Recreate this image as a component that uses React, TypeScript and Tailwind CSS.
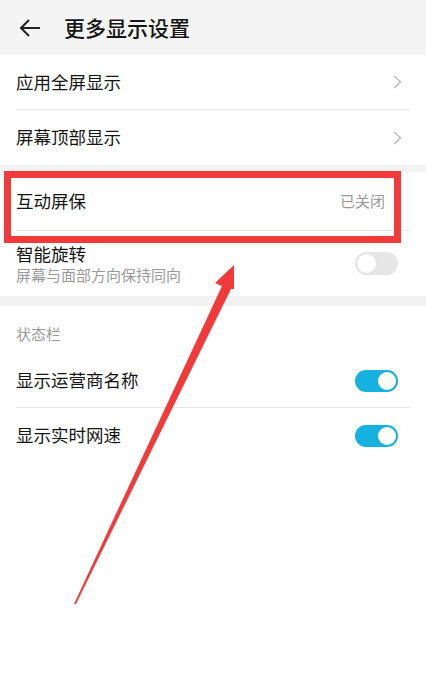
import React from "react";

const font = { fontFamily: '"Noto Sans CJK SC", "Noto Sans", sans-serif' };

function Chevron() {
  return (
    <svg width="9" height="14" viewBox="0 0 9 14" fill="none">
      <path d="M1 1l6.5 6L1 13" stroke="#b8b8b8" strokeWidth="1.4" />
    </svg>
  );
}

function Toggle({ on }: { on: boolean }) {
  return on ? (
    <div className="w-[43px] h-[22px] rounded-full bg-[#17b1df] flex items-center justify-end pr-[2px]">
      <div className="w-[18px] h-[18px] rounded-full bg-white" />
    </div>
  ) : (
    <div className="w-[43px] h-[23px] rounded-full bg-[#e6e6e6] flex items-center pl-[1px]">
      <div className="w-[21px] h-[21px] rounded-full bg-white border border-[#e0e0e0]" />
    </div>
  );
}

export default function App() {
  return (
    <div className="relative w-[426px] h-[697px] bg-white overflow-hidden text-[#151515]" style={font}>
      <div className="h-[55px] bg-[#f4f4f4] flex items-center">
        <div className="pl-[18px] w-[64px]">
          <svg width="24" height="20" viewBox="0 0 24 20" fill="none">
            <path d="M22 10H3M11 2L3 10l8 8" stroke="#222" strokeWidth="2" />
          </svg>
        </div>
        <div className="text-[21px] leading-none font-medium">更多显示设置</div>
      </div>

      <div className="px-[16px]">
        <div className="h-[55px] flex items-center justify-between border-b border-[#e8e8e8]">
          <span className="text-[17.5px]">应用全屏显示</span>
          <span className="pr-[8px] flex"><Chevron /></span>
        </div>
        <div className="h-[55px] flex items-center justify-between">
          <span className="text-[17.5px]">屏幕顶部显示</span>
          <span className="pr-[8px] flex"><Chevron /></span>
        </div>
      </div>

      <div className="h-[7px] bg-[#f2f2f2]" />

      <div className="px-[16px]">
        <div className="h-[59px] flex items-center justify-between border-b border-[#e8e8e8]">
          <span className="text-[17.5px]">互动屏保</span>
          <span className="text-[15px] text-[#999] pr-[25px]">已关闭</span>
        </div>
        <div className="h-[65px] flex items-center justify-between">
          <div className="flex flex-col">
            <span className="text-[17.5px] leading-[22px]">智能旋转</span>
            <span className="text-[15px] leading-[20px] text-[#9a9a9a]">屏幕与面部方向保持同向</span>
          </div>
          <span className="pr-[12px]"><Toggle on={false} /></span>
        </div>
      </div>

      <div className="h-[10px] bg-[#f2f2f2]" />

      <div className="px-[16px]">
        <div className="h-[48px] flex items-center pt-[8px]">
          <span className="text-[15px] text-[#9a9a9a]">状态栏</span>
        </div>
        <div className="h-[54px] flex items-center justify-between border-b border-[#e8e8e8]">
          <span className="text-[17.5px]">显示运营商名称</span>
          <span className="pr-[12px]"><Toggle on={true} /></span>
        </div>
        <div className="h-[55px] flex items-center justify-between">
          <span className="text-[17.5px]">显示实时网速</span>
          <span className="pr-[12px]"><Toggle on={true} /></span>
        </div>
      </div>

      <div className="absolute left-[4px] top-[171px] w-[397px] h-[72px] border-[7px] border-[#f23a3a]" />

      <svg className="absolute left-0 top-0" width="426" height="697" viewBox="0 0 426 697">
        <polygon
          points="234,265 215,283 222,286 74,604 76,604 231,289 234,289"
          fill="#f23a3a"
        />
      </svg>
    </div>
  );
}
